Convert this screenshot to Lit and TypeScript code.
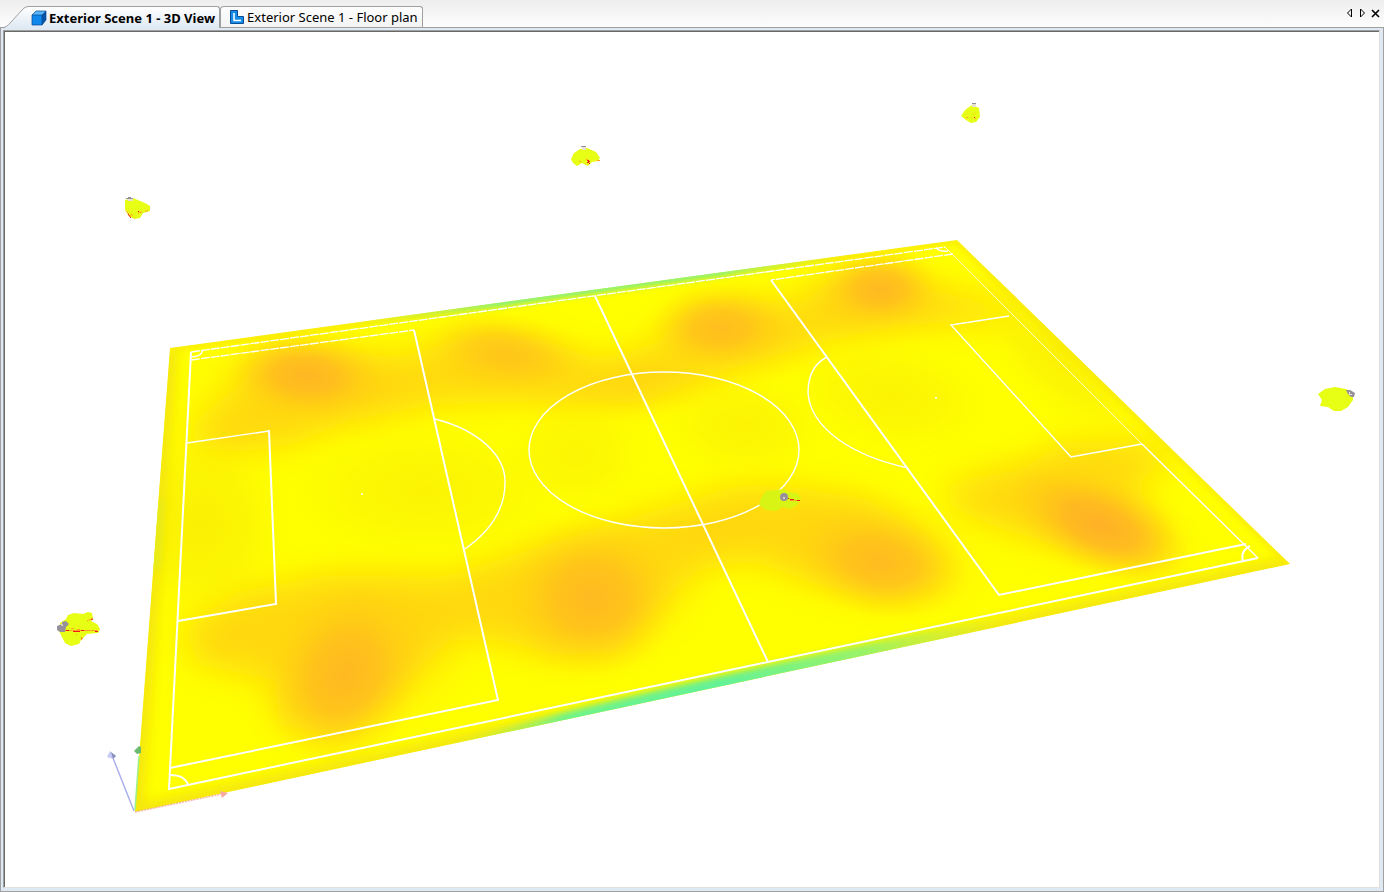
import { LitElement, html, svg, css } from "lit";
import { customElement, state } from "lit/decorators.js";

type Blob = [cx: number, cy: number, rx: number, ry: number, angle: number, opacity: number];

const WARM: Blob[] = [
  [320, 385, 140, 62, 2, 0.6],
  [505, 362, 120, 48, 8, 0.6],
  [640, 385, 140, 36, -8, 0.4],
  [735, 333, 105, 54, 0, 0.6],
  [875, 300, 110, 50, 0, 0.6],
  [360, 650, 140, 105, -20, 0.6],
  [590, 595, 130, 90, -10, 0.7],
  [870, 550, 130, 66, 14, 0.7],
  [1085, 515, 135, 58, 22, 0.8],
];

const HOT: Blob[] = [
  [306, 375, 80, 44, 5, 0.8],
  [505, 350, 76, 38, 10, 0.42],
  [720, 327, 70, 42, 0, 0.6],
  [880, 288, 60, 40, 0, 0.72],
  [345, 675, 78, 96, 24, 0.72],
  [592, 598, 88, 78, 0, 0.68],
  [880, 563, 88, 54, 12, 0.64],
  [1100, 525, 98, 48, 24, 0.95],
];

const SHADE: Blob[] = [
  [425, 490, 150, 75, 0, 0.8],
  [575, 455, 80, 60, 0, 0.7],
  [745, 425, 90, 55, 0, 0.8],
  [890, 395, 110, 60, 10, 0.8],
  [1060, 350, 130, 60, 45, 1],
  [200, 525, 100, 110, 0, 1],
];

const blobs = (list: Blob[], fill: string) =>
  list.map(
    ([cx, cy, rx, ry, a, o]) => svg`<ellipse cx=${cx} cy=${cy} rx=${rx} ry=${ry}
      transform=${`rotate(${a} ${cx} ${cy})`} fill=${`url(#${fill})`} opacity=${o}></ellipse>`
  );

@customElement("scene-view")
export class SceneView extends LitElement {
  static styles = css`
    :host { display: block; min-height: 0; background: #fff; }
    .scene { display: block; width: 100%; height: 100%; }
    .marks { fill: none; stroke: #fff; stroke-width: 2; }
    .thin { stroke-width: 1.4; }
    .faint { stroke-width: 1; stroke: #ffffc8; }
    .dashed { stroke-width: 1.3; stroke-dasharray: 9 1; }
    .glow { fill: #e6ff14; }
    .head { fill: #96909a; }
    .cap { fill: #e8e0d0; }
    .aim { fill: none; stroke: #f01818; stroke-width: 1; }
    .ray { fill: none; stroke: #ffa020; stroke-width: 1; }
  `;

  render() {
    return html`<svg class="scene" viewBox="5 32 1374 855" role="img" aria-label="3D View">
      <defs>
        <clipPath id="ground"><path d="M170 348 957 240 1290 564 135 812Z"></path></clipPath>
        <radialGradient id="warm">
          <stop offset="0" stop-color="#ffd014"></stop>
          <stop offset=".4" stop-color="#ffd212" stop-opacity=".75"></stop>
          <stop offset=".75" stop-color="#ffdc0e" stop-opacity=".25"></stop>
          <stop offset="1" stop-color="#ffe60a" stop-opacity="0"></stop>
        </radialGradient>
        <radialGradient id="hot">
          <stop offset="0" stop-color="#ffae28"></stop>
          <stop offset=".4" stop-color="#ffb424" stop-opacity=".8"></stop>
          <stop offset=".75" stop-color="#ffc21a" stop-opacity=".28"></stop>
          <stop offset="1" stop-color="#ffd014" stop-opacity="0"></stop>
        </radialGradient>
        <radialGradient id="shade">
          <stop offset="0" stop-color="#faf004"></stop>
          <stop offset=".5" stop-color="#faf204" stop-opacity=".7"></stop>
          <stop offset="1" stop-color="#ffff00" stop-opacity="0"></stop>
        </radialGradient>
        <linearGradient id="far" gradientUnits="userSpaceOnUse" x1="345" y1="0" x2="850" y2="0">
          <stop offset="0" stop-color="#c8f040" stop-opacity="0"></stop>
          <stop offset=".3" stop-color="#78f488"></stop>
          <stop offset=".75" stop-color="#78f488"></stop>
          <stop offset="1" stop-color="#c8f040" stop-opacity="0"></stop>
        </linearGradient>
        <linearGradient id="near" gradientUnits="userSpaceOnUse" x1="440" y1="0" x2="1010" y2="0">
          <stop offset="0" stop-color="#c8f040" stop-opacity="0"></stop>
          <stop offset=".22" stop-color="#6cf48c"></stop>
          <stop offset=".5" stop-color="#62f298"></stop>
          <stop offset=".75" stop-color="#90f470" stop-opacity=".9"></stop>
          <stop offset="1" stop-color="#c8f040" stop-opacity="0"></stop>
        </linearGradient>
        <filter id="haze" x="-20%" y="-40%" width="140%" height="180%"><feGaussianBlur stdDeviation="17"></feGaussianBlur></filter>
        <filter id="soft" x="-20%" y="-40%" width="140%" height="180%"><feGaussianBlur stdDeviation="6"></feGaussianBlur></filter>
        <filter id="edge" x="-20%" y="-40%" width="140%" height="180%"><feGaussianBlur stdDeviation="3"></feGaussianBlur></filter>
      </defs>

      <g clip-path="url(#ground)">
        <path fill="#ffff00" d="M170 348 957 240 1290 564 135 812Z"></path>
        ${blobs(SHADE, "shade")}
        <g fill="#ffd80e" filter="url(#haze)">
          <path d="M195 420 240 385 265 352 330 350 400 358 470 336 540 340 600 360 660 342 690 306 740 300 800 305 840 272 900 264 930 290 1005 302 1000 322 900 325 820 342 760 360 700 378 640 402 540 400 430 405 350 420 290 445 240 452 195 448Z"></path>
          <path d="M180 630 240 592 330 575 440 578 530 550 640 515 740 485 800 488 870 500 930 540 950 575 890 600 820 585 750 560 700 570 650 610 620 650 560 655 500 640 450 640 400 685 340 735 280 725 275 680 200 665Z"></path>
          <path d="M950 482 1020 470 1065 442 1145 442 1180 462 1130 482 1160 530 1150 560 1080 552 1000 528 950 508Z"></path>
        </g>
        ${blobs(WARM, "warm")} ${blobs(HOT, "hot")}
        <path filter="url(#soft)" fill="none" stroke="#f4e60a" stroke-width="16" d="M170 348 135 812 1290 564"></path>
        <path filter="url(#edge)" fill="none" stroke="#f8e808" stroke-width="6" d="M170 348 957 240 1290 564"></path>
        <path filter="url(#edge)" fill="#dfec20" opacity=".6" d="M150 500h14l-4 70h-20Z"></path>
        <path filter="url(#edge)" fill="none" stroke="url(#far)" stroke-width="11" d="M345 322 850 252"></path>
        <path filter="url(#edge)" fill="url(#near)" d="M440 775V746Q540 717 650 692 800 657 1000 616V645Z"></path>
      </g>

      <g class="marks">
        <path d="M191 352 169 789 1258 558"></path>
        <path class="faint" d="M945 247 1142 444"></path>
        <path class="thin" d="M1142 444 1258 558"></path>
        <path class="dashed" d="M191 352 945 247M191 360 414 330M953 254 771 280"></path>
        <path d="M414 330 498 700 170 768M771 280 999 595 1246 544"></path>
        <path class="thin" d="M187 443 269 431M1009 316 951 325 1071 457 1142 444"></path>
        <path d="M269 430 276 604 178 621M595 296 768 662"></path>
        <path class="thin" d="M435 419C482 431 506 458 505 483 505 511 489 532 465 549"></path>
        <path class="thin" d="M827 357C811 365 808 380 808 393 811 429 853 456 908 468"></path>
        <ellipse class="thin" cx="664" cy="450" rx="135" ry="78"></ellipse>
        <path class="thin" d="M191 357Q201 357 203 350M936 248Q940 252 948 251"></path>
        <path d="M170 775Q185 775 188 785M1250 546Q1240 551 1243 561"></path>
        <path class="thin" d="M361 494h2M935 398h2"></path>
      </g>

      <path fill="none" stroke="#a8acec" stroke-width="1.4" d="M134 811 113 758"></path>
      <path fill="#c8caf6" d="M107 757 110 751 116 756 113 759Z"></path><path fill="#8c90b8" d="M111 752l5 4-3 3Z"></path>
      <path fill="none" stroke="#9cf08c" stroke-width="1.5" d="M135 810 139 756"></path>
      <path fill="#6cba70" d="M139 746l-5 5 3 3 4-1v-6Z"></path>
      <path fill="none" stroke="#f4b4a8" stroke-width="1.4" stroke-dasharray="2 1" d="M135 812 222 794"></path>
      <path fill="#f7aaa0" d="M220 791l8 2-6 5Z"></path>

      <path class="glow" d="M59 631 60 623 66 619 68 615 74 613 83 614 88 612 92 613 93 618 91 621 97 624 100 629 98 633 87 634 81 640 79 644 71 646 65 643Z"></path>
      <path class="head" d="M62 624 62 622 66 621 69 624 66 627 65 632 60 632 57 630 57 626Z"></path>
      <circle class="cap" cx="62" cy="625" r="1"></circle>
      <path class="ray" d="M65 630.500H97M87 621l6-3M71 628.500h3M77 629.500h3M76 634.500h1M81 640l2-2"></path>
      <path class="aim" d="M66 630.500H69M73 631.500H80M81 630.500h3M95 631.500H98M91 620l2-1M81 638h1"></path>

      <path class="glow" d="M125 200 133 198 145 203 150 206 150 211 143 213 140 218 134 219 129 216 125 210Z"></path>
      <path class="cap" d="M127 198h6v3h-5Z"></path><path class="head" d="M126 198h2v-1h3v1h2v1h-7Z"></path>
      <path class="ray" d="M126 211l3 3M130 215h3M138 213l4-1M145 211h3"></path><path class="aim" d="M128 214l3 4M138 211.500h1"></path>

      <path class="glow" d="M571 159 574 153 580 149 587 148 596 152 600 158 598 161 592 162 588 166 582 163 577 166 573 163Z"></path>
      <path class="cap" d="M582 147h4v3h-4Z"></path><path class="head" d="M581 146h5v1h-5Z"></path>
      <path class="ray" d="M579 161l2 1M586 159l2 1M597 160.500h3"></path><path class="aim" d="M587 160.500h2M588 161.500h2M587 162.500h2M589 163.500h1"></path>

      <path class="glow" d="M961 116 965 110 972 105 979 108 980 117 976 122 971 123 966 120Z"></path>
      <path class="cap" d="M972 104h4v3h-4Z"></path><path class="head" d="M972 103h4v1h-4Z"></path>
      <path class="ray" d="M966 117.500h2M975 118.500h1"></path><path class="aim" d="M974 117.500h1"></path>

      <path class="glow" d="M1318 394 1325 389 1335 387 1346 389 1353 394 1353 400 1348 407 1341 411 1334 411 1328 407 1320 406 1322 400Z"></path>
      <path class="head" d="M1346 390h4l5 3-1 4h-3l-3-3Z"></path><path class="cap" d="M1349 392h1v2h2v1h-3Z"></path>

      <path fill="#d8f414" d="M759 505 761 498 766 491 776 490 784 489 788 492 797 493 801 498 797 505 790 509 783 507 776 511 766 510Z"></path>
      <circle class="head" cx="784" cy="497" r="4"></circle><circle class="cap" cx="784" cy="498" r="1"></circle>
      <path class="ray" d="M790 500.500h10"></path><path class="aim" d="M788 498.500h1M790 499.500h4M797 500.500h3"></path>
    </svg>`;
  }
}

const CUBE = html`<svg class="icon" viewBox="0 0 16 16" aria-hidden="true">
  <path fill="#1088ec" d="M1 5H11V15H1Z"></path>
  <path fill="#5ab8fa" d="M1 5 5 1H15L11 5Z"></path>
  <path fill="#0854a8" d="M11 5 15 1V10L11 15Z"></path>
  <path fill="none" stroke="#084890" stroke-width=".7" d="M1 5 5 1H15V10L11 15H1ZM1 5H11V15M11 5 15 1"></path>
</svg>`;

const PLAN = html`<svg class="icon" viewBox="0 0 16 16" aria-hidden="true">
  <path fill="#148ce8" stroke="#084c94" d="M1.500 1.500H8.500V7.500H14.500V14.500H1.500Z"></path>
  <path fill="none" stroke="#fff" stroke-width="1.500" d="M5 4V11.500H12"></path>
</svg>`;

@customElement("app-root")
export class AppRoot extends LitElement {
  static styles = css`
    :host {
      display: flex;
      flex-direction: column;
      height: 100vh;
      background: #dfe9f3;
      color: #000;
      font: 13px/18px "Noto Sans", "Open Sans", sans-serif;
    }
    .strip {
      display: flex;
      align-items: flex-end;
      height: 27px;
      flex: none;
      padding-left: 4px;
      border-bottom: 1px solid #a0a0a0;
      background: linear-gradient(#eeeeee, #fdfdfd);
    }
    .tab {
      display: flex;
      align-items: stretch;
      height: 21px;
      padding: 0;
      border: 0;
      background: none;
      color: inherit;
      font: inherit;
      white-space: nowrap;
    }
    .tab.active { height: 22px; margin-bottom: -1px; font-weight: 700; }
    .slant { width: 24px; height: 22px; flex: none; }
    .face {
      display: flex;
      align-items: center;
      gap: 2px;
      padding: 0 4px 0 8px;
      border: 1px solid #a0a0a0;
      border-bottom: 0;
      border-radius: 4px 3px 0 0;
      background: linear-gradient(#fdfdfd, #f3f3f3);
    }
    .active .face {
      padding: 0 4px 0 3px;
      border-left: 0;
      border-radius: 0 3px 0 0;
      background: linear-gradient(#ffffff, #dfe9f3);
    }
    .icon { width: 16px; height: 16px; flex: none; }
    .tools { display: flex; align-self: center; margin-left: auto; padding-right: 2px; }
    .tool { width: 13px; height: 16px; padding: 0; border: 0; background: none; }
    .glyph { display: block; width: 13px; height: 16px; }
    .frame {
      display: flex;
      flex: 1;
      min-height: 0;
      padding: 2px 3px 3px 2px;
      border: solid #a0a0a0;
      border-width: 0 1px 1px;
    }
    .inset {
      display: flex;
      flex: 1;
      border: 1px solid;
      border-color: #a0a0a0 #e3e0dc #e3e0dc #a0a0a0;
    }
    .well { flex: 1; display: flex; border: solid #696969; border-width: 1px 0 0 1px; }
    .view { flex: 1; }
  `;

  @state() private tab = "3d";

  render() {
    return html`
      <div class="strip" role="tablist">
        <button class="tab active" role="tab" aria-selected=${this.tab === "3d"} @click=${() => (this.tab = "3d")}>
          <svg class="slant" viewBox="0 0 24 22" aria-hidden="true">
            <defs><linearGradient id="fill" x2="0" y2="1"><stop stop-color="#fff"></stop><stop offset="1" stop-color="#dfe9f3"></stop></linearGradient></defs>
            <path fill="url(#fill)" d="M0 22C4 20 5 18 8 15L18 4Q21 .5 24 .5V22Z"></path>
            <path fill="none" stroke="#a0a0a0" d="M0 21.500C4 20 5 18 8 15L18 4Q21 .5 24 .5"></path>
          </svg>
          <span class="face">${CUBE}<span>Exterior Scene 1 - 3D View</span></span>
        </button>
        <button class="tab" role="tab" aria-selected=${this.tab === "plan"} @click=${() => (this.tab = "plan")}>
          <span class="face">${PLAN}<span>Exterior Scene 1 - Floor plan</span></span>
        </button>
        <div class="tools">
          <button class="tool" aria-label="Previous tab"><svg class="glyph" viewBox="0 0 13 16"><path fill="none" stroke="#000" d="M8.500 3V11L4.500 7Z"></path></svg></button>
          <button class="tool" aria-label="Next tab"><svg class="glyph" viewBox="0 0 13 16"><path fill="none" stroke="#000" d="M4.500 3V11L8.500 7Z"></path></svg></button>
          <button class="tool" aria-label="Close"><svg class="glyph" viewBox="0 0 13 16"><path fill="none" stroke="#000" stroke-width="1.600" d="M3 4 10 11M10 4 3 11"></path></svg></button>
        </div>
      </div>
      <main class="frame"><div class="inset"><div class="well"><scene-view class="view"></scene-view></div></div></main>
    `;
  }
}
